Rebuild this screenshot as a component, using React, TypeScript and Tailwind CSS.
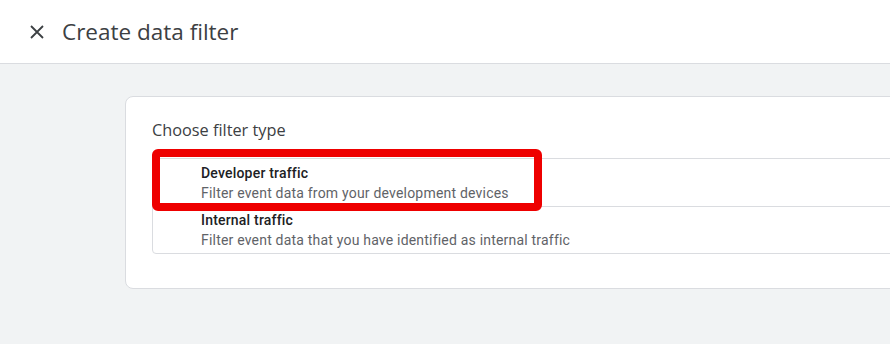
import React from "react";

export default function App() {
  return (
    <div className="w-[890px] h-[344px] overflow-hidden bg-[#f1f3f4] flex flex-col" style={{ fontFamily: "Roboto, 'Liberation Sans', sans-serif" }}>
      <div className="h-[64px] bg-white border-b border-[#dadce0] flex items-center shrink-0">
        <div className="w-[62px] flex justify-center pl-[12px]">
          <svg width="14" height="14" viewBox="0 0 14 14" className="text-[#3c4043]">
            <path d="M1 1 L13 13 M13 1 L1 13" stroke="currentColor" strokeWidth="1.8" />
          </svg>
        </div>
        <div className="text-[22.5px] text-[#3c4043]" style={{ fontFamily: "'Open Sans', Roboto, sans-serif" }}>Create data filter</div>
      </div>
      <div className="pl-[125px] pt-[32px]">
        <div className="w-[820px] h-[193px] bg-white border border-[#dadce0] rounded-[8px] pl-[26px] pt-[21px]">
          <div className="text-[16.3px] text-[#3c4043] leading-[24px]" style={{ fontFamily: "'Open Sans', Roboto, sans-serif" }}>Choose filter type</div>
          <div className="relative mt-[16px] border border-[#dadce0] rounded-[4px] w-[800px]">
            <div className="h-[48px] pl-[48px] flex flex-col justify-center border-b border-[#dadce0]">
              <div className="text-[14px] font-medium text-[#202124] leading-[20px] tracking-[0.2px]">Developer traffic</div>
              <div className="text-[14px] text-[#5f6368] leading-[20px] tracking-[0.2px]">Filter event data from your development devices</div>
            </div>
            <div className="h-[46px] pl-[48px] flex flex-col justify-center">
              <div className="text-[14px] font-medium text-[#202124] leading-[20px] tracking-[0.2px]">Internal traffic</div>
              <div className="text-[14px] text-[#5f6368] leading-[20px] tracking-[0.2px]">Filter event data that you have identified as internal traffic</div>
            </div>
            <div className="absolute left-[-1px] top-[-10px] w-[390px] h-[62px] border-[8px] border-[#ee0000] rounded-[6px]" />
          </div>
        </div>
      </div>
    </div>
  );
}
